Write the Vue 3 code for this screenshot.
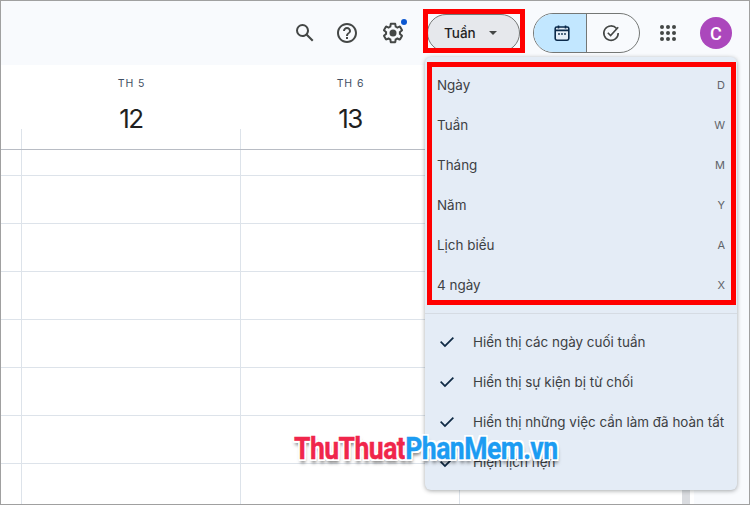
<template>
  <div class="shot">
    <header class="topbar">
      <button class="icon-btn search" aria-label="Tìm kiếm">
        <svg viewBox="0 0 24 24" width="24" height="24"><path d="M20.49 19l-5.73-5.73C15.53 12.2 16 10.91 16 9.5A6.5 6.5 0 1 0 9.5 16c1.41 0 2.7-.47 3.77-1.24L19 20.49 20.49 19zM5 9.5C5 7.01 7.01 5 9.5 5S14 7.01 14 9.5 11.99 14 9.5 14 5 11.99 5 9.5z" /></svg>
      </button>
      <button class="icon-btn help" aria-label="Trợ giúp">
        <svg viewBox="0 0 24 24" width="24" height="24"><path d="M11 18h2v-2h-2v2zm1-16C6.48 2 2 6.48 2 12s4.48 10 10 10 10-4.48 10-10S17.52 2 12 2zm0 18c-4.41 0-8-3.59-8-8s3.59-8 8-8 8 3.59 8 8-3.59 8-8 8zm0-14c-2.21 0-4 1.79-4 4h2c0-1.1.9-2 2-2s2 .9 2 2c0 2-3 1.75-3 5h2c0-2.25 3-2.5 3-5 0-2.21-1.79-4-4-4z" /></svg>
      </button>
      <button class="icon-btn gear" aria-label="Cài đặt">
        <svg viewBox="0 0 24 24" width="24" height="24"><path d="M13.85 22.25h-3.7c-.74 0-1.36-.54-1.45-1.27l-.27-1.89c-.27-.14-.53-.29-.79-.46l-1.8.72c-.7.26-1.47-.03-1.81-.65L2.2 15.53c-.35-.66-.2-1.44.36-1.88l1.53-1.19c-.01-.15-.02-.3-.02-.46 0-.15.01-.31.02-.46l-1.52-1.19c-.59-.45-.74-1.26-.37-1.88l1.85-3.19c.34-.62 1.11-.9 1.79-.63l1.81.73c.26-.17.52-.32.78-.46l.27-1.91c.09-.7.71-1.25 1.44-1.25h3.7c.74 0 1.36.54 1.45 1.27l.27 1.89c.27.14.53.29.79.46l1.8-.72c.71-.26 1.48.03 1.82.65l1.84 3.18c.36.66.2 1.44-.36 1.88l-1.52 1.19c.01.15.02.3.02.46s-.01.31-.02.46l1.52 1.19c.56.45.72 1.23.37 1.86l-1.86 3.22c-.34.62-1.11.9-1.8.63l-1.8-.72c-.26.17-.52.32-.78.46l-.27 1.91c-.1.68-.72 1.22-1.46 1.22zm-3.23-2h2.76l.37-2.55.53-.22c.44-.18.88-.44 1.34-.78l.45-.34 2.38.96 1.38-2.4-2.03-1.58.07-.56c.03-.26.06-.51.06-.78s-.03-.53-.06-.78l-.07-.56 2.03-1.58-1.39-2.4-2.39.96-.45-.35c-.42-.32-.87-.58-1.33-.77l-.52-.22-.37-2.55h-2.76l-.37 2.55-.53.21c-.44.19-.88.44-1.34.79l-.45.33-2.38-.95-1.39 2.39 2.03 1.58-.07.56a7 7 0 0 0-.06.79c0 .26.02.53.06.78l.07.56-2.03 1.58 1.38 2.4 2.39-.96.45.35c.43.33.86.58 1.33.77l.53.22.38 2.55z" /><circle cx="12" cy="12" r="3.5" /></svg>
        <span class="dot"></span>
      </button>
      <button class="view-btn">
        <span>Tuần</span>
        <i class="caret"></i>
      </button>
      <div class="switch">
        <span class="seg on">
          <svg viewBox="0 0 20 20" width="20" height="20">
            <rect x="3.2" y="4" width="13.6" height="13.2" rx="1.6" fill="#e4eef8" stroke="#0a2a4a" stroke-width="1.6" />
            <path d="M6.5 2.4v3M13.5 2.4v3M3.2 7.4h13.6" fill="none" stroke="#0a2a4a" stroke-width="1.6" />
            <circle cx="7" cy="11" r=".9" fill="#0a2a4a" />
            <circle cx="10" cy="11" r=".9" fill="#0a2a4a" />
            <circle cx="13" cy="11" r=".9" fill="#0a2a4a" />
          </svg>
        </span>
        <span class="seg check">
          <svg viewBox="0 0 20 20" width="20" height="20" fill="none" stroke="#444746" stroke-width="1.6">
            <path d="M15.6 5.6A7.2 7.2 0 1 0 17.2 10" />
            <path d="M6.8 9.8l2.8 2.8 7.6-8.4" />
          </svg>
        </span>
      </div>
      <div class="apps" aria-label="Ứng dụng">
        <i v-for="n in 9" :key="n"></i>
      </div>
      <div class="avatar">C</div>
    </header>

    <main class="body">
      <div class="calendar">
        <div class="day-heads">
          <div v-for="(d, i) in days" :key="i" class="day-head">
            <span class="dow">{{ d.label }}</span>
            <span class="num">{{ d.num }}</span>
          </div>
        </div>
        <div class="stubs">
          <i v-for="n in 3" :key="n"></i>
        </div>
        <div class="grid">
          <div v-for="(h, i) in rows" :key="i" class="row" :style="{ height: h + 'px' }">
            <i v-for="n in 3" :key="n"></i>
          </div>
        </div>
      </div>
      <div class="gutter"><div class="scrollbar"></div></div>
      <div class="side"></div>
    </main>

    <div class="menu">
      <div class="views">
        <div v-for="v in views" :key="v.name" class="view-item">
          <span>{{ v.name }}</span>
          <span class="key">{{ v.key }}</span>
        </div>
      </div>
      <div class="sep"></div>
      <div v-for="o in options" :key="o" class="opt">
        <svg viewBox="0 0 24 24" width="20" height="20"><path d="M9.55 18.2 3.65 12.3l1.45-1.45 4.45 4.45L18.9 5.95l1.45 1.45z" /></svg>
        <span>{{ o }}</span>
      </div>
    </div>

    <div class="mark mark-btn"></div>
    <div class="mark mark-menu"></div>
    <div class="watermark"><span class="red">ThuThuat</span><span class="blue">PhanMem.vn</span></div>
  </div>
</template>

<script setup>
const days = [
  { label: 'TH 5', num: 12 },
  { label: 'TH 6', num: 13 },
  { label: '', num: '' }
]

const rows = [26, 48, 48, 48, 48, 48, 48, 48, 48]

const views = [
  { name: 'Ngày', key: 'D' },
  { name: 'Tuần', key: 'W' },
  { name: 'Tháng', key: 'M' },
  { name: 'Năm', key: 'Y' },
  { name: 'Lịch biểu', key: 'A' },
  { name: '4 ngày', key: 'X' }
]

const options = [
  'Hiển thị các ngày cuối tuần',
  'Hiển thị sự kiện bị từ chối',
  'Hiển thị những việc cần làm đã hoàn tất',
  'Hiện lịch hẹn'
]
</script>

<style>
html, body {
  margin: 0;
  overflow: hidden;
}
</style>

<style scoped>
.shot {
  position: relative;
  width: 750px;
  height: 505px;
  box-sizing: border-box;
  border: 1px solid #a0a0a0;
  overflow: hidden;
  background: #f8fafd;
  font-family: Inter, Roboto, "Liberation Sans", sans-serif;
  color: #3c4043;
  display: flex;
  flex-direction: column;
}

.topbar {
  height: 64px;
  flex: none;
  display: flex;
  align-items: center;
  padding: 0 17px 0 0;
  justify-content: flex-end;
  background: #f8fafd;
}

.icon-btn {
  position: relative;
  width: 24px;
  height: 24px;
  padding: 0;
  border: 0;
  background: none;
}

.icon-btn svg {
  display: block;
  fill: #444746;
}

.search { margin-right: 18px; }
.help { margin-right: 22px; }
.gear { margin-right: 22px; }

.dot {
  position: absolute;
  top: -2px;
  right: -2px;
  width: 6px;
  height: 6px;
  border-radius: 50%;
  background: #0b57d0;
}

.view-btn {
  width: 93px;
  height: 38px;
  box-sizing: border-box;
  border: 1px solid #747775;
  border-radius: 19px;
  background: #e6e8ec;
  color: #1f1f1f;
  font: 500 13.5px Inter, Roboto, sans-serif;
  display: flex;
  align-items: center;
  padding: 0 0 0 16px;
  margin-right: 13px;
}

.caret {
  margin-left: 13px;
  width: 0;
  height: 0;
  border-left: 4.5px solid transparent;
  border-right: 4.5px solid transparent;
  border-top: 4.5px solid #444746;
}

.switch {
  display: flex;
  width: 107px;
  height: 40px;
  box-sizing: border-box;
  border: 1px solid #747775;
  border-radius: 20px;
  overflow: hidden;
  margin-right: 20px;
}

.seg {
  flex: 1;
  display: flex;
  align-items: center;
  justify-content: center;
}

.seg.on {
  background: #c2e7ff;
  border-right: 1px solid #747775;
  padding-left: 4px;
}

.seg.check {
  padding-right: 4px;
}

.apps {
  width: 16px;
  height: 16px;
  display: grid;
  grid-template-columns: repeat(3, 4px);
  grid-auto-rows: 4px;
  gap: 2px;
  margin-right: 24px;
}

.apps i {
  border-radius: 50%;
  background: #444746;
}

.avatar {
  width: 32px;
  height: 32px;
  border-radius: 50%;
  background: #ab47bc;
  color: #fff;
  font: 500 18px Roboto, sans-serif;
  display: flex;
  align-items: center;
  justify-content: center;
}

.body {
  flex: 1;
  display: flex;
  min-height: 0;
  background: #f8fafd;
}

.calendar {
  width: 681px;
  flex: none;
  background: #fff;
}

.day-heads {
  display: grid;
  grid-template-columns: repeat(3, 219px);
  padding-left: 21px;
  height: 64px;
}

.day-head {
  display: flex;
  flex-direction: column;
  align-items: center;
}

.dow {
  margin-top: 13px;
  height: 12px;
  font-size: 10.5px;
  line-height: 12px;
  font-weight: 400;
  letter-spacing: 0.9px;
  color: #3f4f63;
}

.num {
  margin-top: 13px;
  margin-left: -1px;
  font-size: 26px;
  line-height: 32px;
  letter-spacing: -1.5px;
  color: #1f1f1f;
}

.stubs {
  display: flex;
  padding-left: 20px;
  height: 20px;
}

.stubs i,
.row i {
  width: 219px;
  box-sizing: border-box;
  border-left: 1px solid #dde3ea;
}

.row {
  box-sizing: border-box;
  display: flex;
  padding-left: 20px;
  border-top: 1px solid #dde3ea;
}

.row:first-child {
  border-top-color: #b8bcc4;
}

.gutter {
  width: 12px;
  flex: none;
  background: #fff;
}

.scrollbar {
  width: 8px;
  height: 100%;
  background: #dadce0;
}

.side {
  flex: 1;
}

.menu {
  position: absolute;
  left: 424px;
  top: 56px;
  width: 312px;
  height: 433px;
  border-radius: 6px;
  background: #e4ecf6;
  box-shadow: 0 1px 4px rgba(60, 64, 67, 0.45);
  font-size: 13.45px;
  color: #3c4043;
}

.views {
  padding-top: 8px;
}

.view-item {
  height: 40px;
  display: flex;
  align-items: center;
  justify-content: space-between;
  padding: 0 12px;
}

.key {
  font-size: 11px;
  color: #5f6368;
}

.sep {
  height: 1px;
  margin: 8px 0;
  background: #d5dbe3;
}

.opt {
  height: 40px;
  display: flex;
  align-items: center;
  padding-left: 12px;
  white-space: nowrap;
}

.opt svg {
  flex: none;
  fill: #0f2a44;
  margin-right: 16px;
}

.mark {
  position: absolute;
  box-sizing: border-box;
  border: 5px solid #f00;
}

.mark-btn {
  left: 422px;
  top: 8px;
  width: 102px;
  height: 44px;
}

.mark-menu {
  left: 426px;
  top: 61px;
  width: 309px;
  height: 243px;
}

.watermark {
  position: absolute;
  left: 293px;
  top: 430px;
  font-family: Roboto, "Open Sans", sans-serif;
  font-weight: 700;
  font-size: 31px;
  line-height: 36px;
  letter-spacing: -0.6px;
  white-space: nowrap;
  transform: scaleX(0.855);
  transform-origin: left center;
  -webkit-text-stroke: 0.4px currentColor;
  text-shadow:
    2px 0 0 #fff, -2px 0 0 #fff, 0 2px 0 #fff, 0 -2px 0 #fff,
    2px 2px 0 #fff, -2px -2px 0 #fff, 2px -2px 0 #fff, -2px 2px 0 #fff,
    1px 4px 4px rgba(0, 0, 0, 0.55);
}

.red { color: #f0264b; }
.blue { color: #1c9cf2; }
</style>
